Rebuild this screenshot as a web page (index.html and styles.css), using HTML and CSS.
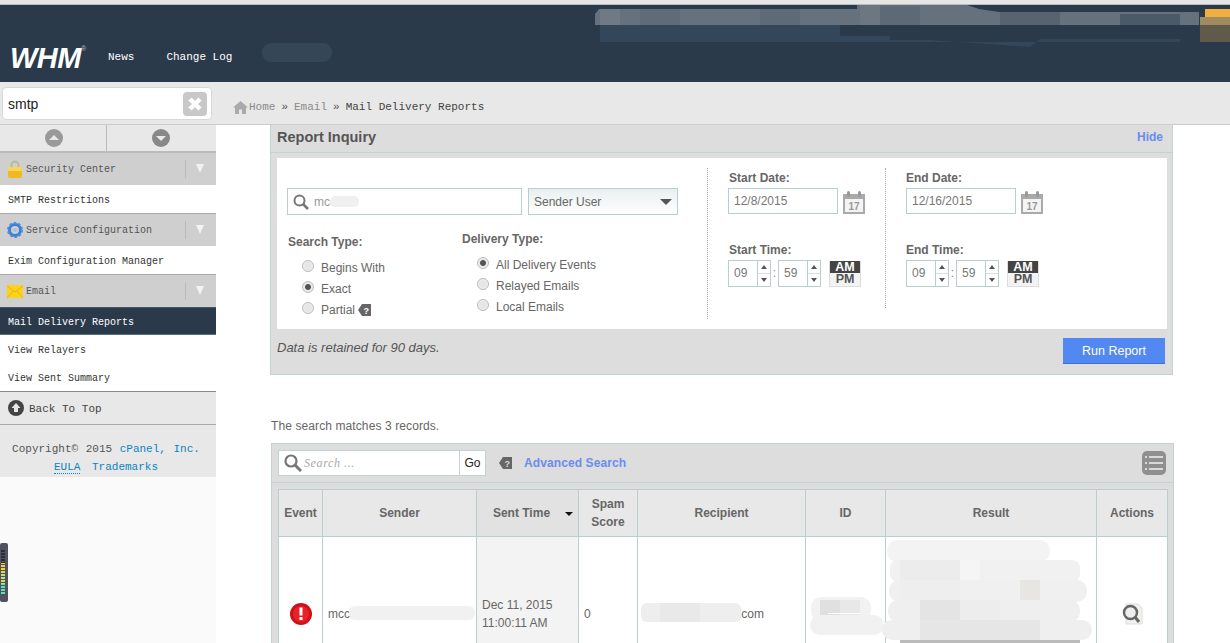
FILE: index.html
```html
<!DOCTYPE html>
<html lang="en">
<head>
<meta charset="utf-8">
<title>WHM Mail Delivery Reports</title>
<link rel="stylesheet" href="styles.css">
</head>
<body>
<div class="topline"></div>
<header class="header">
  <div class="logo">WHM<sup class="reg">®</sup></div>
  <a class="hlink news">News</a>
  <a class="hlink">Change Log</a>
</header>
<div class="subbar">
  <div class="quick">
    <span class="quick-text">smtp</span>
    <span class="quick-clear"><svg width="24" height="24" viewBox="0 0 24 24"><rect width="24" height="24" rx="4" fill="#c8c8c8"/><path d="M7 7l10 10M17 7L7 17" stroke="#fff" stroke-width="4.4"/></svg></span>
  </div>
  <nav class="crumbs">
    <svg class="home" width="15" height="13" viewBox="0 0 15 13"><path d="M7.5 0L0 6.5h2V13h4V8.500h3V13h4V6.500h2z" fill="#aaa"/></svg>
    <span>Home</span><b class="sep">»</b><span>Email</span><b class="sep">»</b><span class="here">Mail Delivery Reports</span>
  </nav>
</div>
<div class="layout">
  <aside class="sidebar">
    <div class="arrows">
      <div class="arrow-cell first"><svg width="18" height="18" viewBox="0 0 18 18"><circle cx="9" cy="9" r="9" fill="#999"/><path d="M4 11l5-5 5 5z" fill="#e8e8e8"/></svg></div>
      <div class="arrow-cell second"><svg width="18" height="18" viewBox="0 0 18 18"><circle cx="9" cy="9" r="9" fill="#888"/><path d="M4 7l5 5 5-5z" fill="#e8e8e8"/></svg></div>
    </div>
    <div class="cat">
      <svg class="cat-ico" width="14" height="18" viewBox="0 0 14 18"><path d="M3.500 8V5a3.500 3.500 0 017 0v3" fill="none" stroke="#b9b9a0" stroke-width="2"/><rect x="0" y="7" width="14" height="11" rx="2" fill="#f2b824"/><rect x="0" y="7" width="14" height="4" fill="#f9d65a"/></svg>
      <span class="cat-name">Security Center</span><span class="cat-tog"><i></i></span>
    </div>
    <a class="item">SMTP Restrictions</a>
    <div class="cat lined">
      <svg class="cat-ico wide" width="16" height="16" viewBox="0 0 16 16"><circle cx="8" cy="8" r="5.500" fill="none" stroke="#3f7fd0" stroke-width="3"/><circle cx="8" cy="8" r="7" fill="none" stroke="#4d8ee0" stroke-width="2" stroke-dasharray="2.500 2"/><circle cx="8" cy="8" r="2" fill="#9cc3ee"/></svg>
      <span class="cat-name">Service Configuration</span><span class="cat-tog"><i></i></span>
    </div>
    <a class="item">Exim Configuration Manager</a>
    <div class="cat lined">
      <svg class="cat-ico wide" width="16" height="13" viewBox="0 0 16 13"><rect width="16" height="13" fill="#fbd31d"/><path d="M0 1l8 6 8-6M0 13l6-7M16 13l-6-7" fill="none" stroke="#eeb10e"/></svg>
      <span class="cat-name">Email</span><span class="cat-tog"><i></i></span>
    </div>
    <a class="item active">Mail Delivery Reports</a>
    <a class="item">View Relayers</a>
    <a class="item">View Sent Summary</a>
    <div class="backtop">
      <svg width="16" height="16" viewBox="0 0 16 16"><circle cx="8" cy="8" r="8" fill="#444"/><path d="M8 3l4.500 5H10v4H6V8H3.500z" fill="#e8e8e8"/></svg>
      <span>Back To Top</span>
    </div>
    <div class="copy">
      <div class="copy-line">Copyright© 2015 <a class="blue">cPanel, Inc.</a></div>
      <div><a class="blue eula">EULA</a> <a class="blue">Trademarks</a></div>
    </div>
  </aside>
  <main class="content">
    <section class="panel report">
      <div class="panel-head">
        <h2 class="panel-title">Report Inquiry</h2>
        <a class="hide">Hide</a>
      </div>
      <div class="panel-rule"></div>
      <div class="form-body">
        <div class="col-main">
          <div class="search-row">
            <div class="field user">
              <svg width="16" height="16" viewBox="0 0 16 16"><circle cx="6.500" cy="6.500" r="5" fill="none" stroke="#777" stroke-width="2"/><path d="M10 10l5 5" stroke="#777" stroke-width="2.600"/></svg>
              <span>mcc</span>
            </div>
            <div class="field select"><span>Sender User</span><i class="caret"></i></div>
          </div>
          <div class="types">
            <div class="type-a">
              <div class="label">Search Type:</div>
              <div class="radio-row"><i class="radio"></i>Begins With</div>
              <div class="radio-row"><i class="radio on"></i>Exact</div>
              <div class="radio-row"><i class="radio"></i>Partial
                <svg class="tag" width="13" height="12" viewBox="0 0 13 12"><path d="M4 0h9v12H4L0 6z" fill="#666"/><text x="5.500" y="9.500" font-size="9" font-weight="700" fill="#fff" font-family="Liberation Sans">?</text></svg>
              </div>
            </div>
            <div class="type-b">
              <div class="label">Delivery Type:</div>
              <div class="radio-row"><i class="radio on"></i>All Delivery Events</div>
              <div class="radio-row"><i class="radio"></i>Relayed Emails</div>
              <div class="radio-row"><i class="radio"></i>Local Emails</div>
            </div>
          </div>
        </div>
        <div class="col-date first">
          <div class="label">Start Date:</div>
          <div class="date-row">
            <div class="field date">12/8/2015</div>
            <svg class="cal" width="22" height="23" viewBox="0 0 22 23"><path d="M0 3h22v20H0z" fill="#aaa"/><rect x="2" y="8" width="18" height="13" fill="#f4f4f4"/><rect x="4" y="0" width="3" height="6" rx="1.500" fill="#999"/><rect x="15" y="0" width="3" height="6" rx="1.500" fill="#999"/><text x="11" y="19" text-anchor="middle" font-size="10" font-weight="700" fill="#999" font-family="Liberation Sans">17</text></svg>
          </div>
          <div class="label time-label">Start Time:</div>
          <div class="time-row">
            <div class="spin"><span class="spin-val">09</span><span class="spin-btns"><i class="up"></i><i class="down"></i></span></div>
            <span class="colon">:</span>
            <div class="spin"><span class="spin-val">59</span><span class="spin-btns"><i class="up"></i><i class="down"></i></span></div>
            <div class="ampm"><span class="am">AM</span><span class="pm">PM</span></div>
          </div>
        </div>
        <div class="col-date last">
          <div class="label">End Date:</div>
          <div class="date-row">
            <div class="field date">12/16/2015</div>
            <svg class="cal" width="22" height="23" viewBox="0 0 22 23"><path d="M0 3h22v20H0z" fill="#aaa"/><rect x="2" y="8" width="18" height="13" fill="#f4f4f4"/><rect x="4" y="0" width="3" height="6" rx="1.500" fill="#999"/><rect x="15" y="0" width="3" height="6" rx="1.500" fill="#999"/><text x="11" y="19" text-anchor="middle" font-size="10" font-weight="700" fill="#999" font-family="Liberation Sans">17</text></svg>
          </div>
          <div class="label time-label">End Time:</div>
          <div class="time-row">
            <div class="spin"><span class="spin-val">09</span><span class="spin-btns"><i class="up"></i><i class="down"></i></span></div>
            <span class="colon">:</span>
            <div class="spin"><span class="spin-val">59</span><span class="spin-btns"><i class="up"></i><i class="down"></i></span></div>
            <div class="ampm"><span class="am">AM</span><span class="pm">PM</span></div>
          </div>
        </div>
      </div>
      <div class="form-foot">
        <em class="retain">Data is retained for 90 days.</em>
        <button class="run">Run Report</button>
      </div>
    </section>
    <p class="matches">The search matches 3 records.</p>
    <section class="panel results">
      <div class="toolbar">
        <div class="tsearch">
          <svg width="18" height="18" viewBox="0 0 18 18"><circle cx="7" cy="7" r="5.500" fill="none" stroke="#777" stroke-width="2.200"/><path d="M11 11l6 6" stroke="#777" stroke-width="3"/></svg>
          <span class="tplaceholder">Search ...</span>
          <span class="go">Go</span>
        </div>
        <svg class="ttag" width="13" height="12" viewBox="0 0 13 12"><path d="M4 0h9v12H4L0 6z" fill="#666"/><text x="5.500" y="9.500" font-size="9" font-weight="700" fill="#ddd" font-family="Liberation Sans">?</text></svg>
        <a class="advanced">Advanced Search</a>
        <svg class="listico" width="24" height="24" viewBox="0 0 24 24"><rect width="24" height="24" rx="5" fill="#8f8f8f"/><path d="M3 6h2M7 6h14M3 12h2M7 12h14M3 18h2M7 18h14" stroke="#f2f2f2" stroke-width="1.600"/></svg>
      </div>
      <div class="panel-rule"></div>
      <div class="table-wrap">
        <table class="grid">
          <colgroup><col class="c1"><col class="c2"><col class="c3"><col class="c4"><col class="c5"><col class="c6"><col class="c7"><col class="c8"></colgroup>
          <thead>
            <tr><th>Event</th><th>Sender</th><th class="sorted"><span class="sort-label">Sent Time</span><i class="sort"></i></th><th>Spam<br>Score</th><th>Recipient</th><th>ID</th><th>Result</th><th>Actions</th></tr>
          </thead>
          <tbody>
            <tr>
              <td class="ctr"><svg width="22" height="22" viewBox="0 0 22 22"><circle cx="11" cy="11" r="11" fill="#d01018"/><circle cx="11" cy="11" r="8" fill="#e8222a"/><rect x="9.500" y="4.500" width="3" height="8" fill="#fff"/><rect x="9.500" y="14" width="3" height="3" fill="#fff"/></svg></td>
              <td>mcc</td>
              <td class="sorted-cell">Dec 11, 2015<br>11:00:11 AM</td>
              <td>0</td>
              <td class="rcpt">.com</td>
              <td></td>
              <td></td>
              <td class="ctr"><svg width="22" height="22" viewBox="0 0 22 22"><path d="M5 1h12l4 4v16H5z" fill="#f1f1ee" stroke="#ddd"/><circle cx="9.500" cy="9.500" r="6.500" fill="#eee" stroke="#666" stroke-width="2.500"/><path d="M14 14l4 5" stroke="#666" stroke-width="3"/></svg></td>
            </tr>
          </tbody>
        </table>
      </div>
    </section>
  </main>
</div>
<svg class="overlay" width="1230" height="643" viewBox="0 0 1230 643">
  <defs>
    <pattern id="stripes" width="8" height="3" patternUnits="userSpaceOnUse"><rect width="8" height="1" fill="#50525e"/></pattern>
  </defs>
  <path d="M595 14l4-5h258v-4h110l12 4 20 3h200v13H595z" fill="#65717d"/>
  <rect x="600" y="9" width="20" height="16" fill="#6f7a85"/>
  <rect x="640" y="9" width="40" height="16" fill="#5f6b78"/>
  <rect x="760" y="9" width="40" height="16" fill="#5d6a77"/>
  <rect x="860" y="5" width="20" height="20" fill="#6c7782"/>
  <rect x="880" y="6" width="40" height="19" fill="#5c6976"/>
  <rect x="1000" y="12" width="60" height="13" fill="#566471"/>
  <rect x="1120" y="14" width="60" height="11" fill="#4a5a69"/>
  <path d="M600 25h240v11h50v4h40l100 7 10-8h140v3h-580z" fill="#34465a"/>
  <path d="M1205 9h25v8h-25z" fill="#f0b040"/><path d="M1200 17h30v8h-30z" fill="#a08a60"/><path d="M1200 25h30v17h-30z" fill="#5f5a4a"/>
  <rect x="262" y="43" width="70" height="19" rx="9" fill="#354757"/>
  <rect x="330" y="196" width="29" height="11" rx="5" fill="#f0f0f0"/>
  <rect x="349" y="606" width="126" height="14" rx="6" fill="#f1f1f1"/>
  <rect x="641" y="603" width="100" height="19" rx="6" fill="#eeeeee"/>
  <rect x="660" y="603" width="40" height="19" fill="#e9e9e9"/>
  <rect x="811" y="597" width="60" height="24" rx="10" fill="#f2f2f2"/>
  <rect x="820" y="600" width="20" height="20" fill="#e0e0e0"/>
  <rect x="840" y="600" width="20" height="20" fill="#e8e8e8"/>
  <rect x="828" y="613" width="32" height="1" fill="#fff"/>
  <rect x="810" y="615" width="74" height="20" rx="10" fill="#f1f1f1"/>
  <rect x="887" y="540" width="163" height="22" rx="10" fill="#f3f3f3"/>
  <rect x="890" y="560" width="190" height="22" rx="8" fill="#f1f1f1"/>
  <rect x="889" y="580" width="198" height="22" rx="10" fill="#f0f0f0"/>
  <rect x="888" y="600" width="192" height="22" rx="10" fill="#efefef"/>
  <rect x="882" y="620" width="210" height="20" rx="10" fill="#efefef"/>
  <rect x="900" y="560" width="60" height="20" fill="#ececec"/>
  <rect x="960" y="560" width="20" height="20" fill="#f5f5f5"/>
  <rect x="1020" y="580" width="20" height="20" fill="#e8e6e3"/>
  <rect x="900" y="580" width="60" height="20" fill="#eeeeee"/>
  <rect x="920" y="600" width="40" height="20" fill="#e4e4e4"/>
  <rect x="960" y="600" width="40" height="20" fill="#ededed"/>
  <rect x="920" y="620" width="120" height="20" fill="#e6e6e6"/>
  <rect x="900" y="640" width="180" height="3" fill="#bbb"/>
  <rect x="0" y="543" width="8" height="59" rx="2" fill="#50525e"/>
  <rect x="1" y="550" width="4" height="13" fill="#2a2c36"/>
  <rect x="1" y="563" width="4" height="10" fill="#f2d23a"/>
  <rect x="1" y="573" width="4" height="11" fill="#c6e06a"/>
  <rect x="1" y="584" width="4" height="11" fill="#5fdfb0"/>
  <rect x="1" y="550" width="4" height="45" fill="url(#stripes)"/>
</svg>
</body>
</html>
```
FILE: styles.css
```css
* { box-sizing: border-box; }
html, body { margin: 0; padding: 0; }
body {
  position: relative;
  width: 1230px;
  height: 643px;
  overflow: hidden;
  background: #fff;
  font-family: "Liberation Sans", Arial, sans-serif;
  font-size: 12px;
  color: #666;
}
.topline { height: 5px; background: #e6e6e6; border-bottom: 1px solid #bbb; }
.header {
  height: 77px;
  background: #2a3a4b;
  display: flex;
  align-items: flex-start;
  padding: 39px 0 0 10px;
  color: #fff;
}
.logo {
  width: 98px;
  font: italic 700 29px/28px "Liberation Sans", sans-serif;
  letter-spacing: -0.5px;
  color: #fff;
  white-space: nowrap;
}
.reg { font-size: 7px; font-style: normal; font-weight: 400; vertical-align: 17px; line-height: 0; color: #bbb; letter-spacing: 0; }
.hlink { font: 11px/26px "Liberation Mono", monospace; color: #fff; }
.news { margin-right: 32px; }
.subbar {
  height: 43px;
  background: #e8e8e8;
  border-bottom: 1px solid #ccc;
  display: flex;
  align-items: flex-start;
}
.quick {
  width: 210px;
  height: 33px;
  margin: 5px 0 0 2px;
  background: #fff;
  border: 1px solid #d8d8d8;
  border-radius: 4px;
  display: flex;
  align-items: center;
  justify-content: space-between;
  padding: 0 4px 0 5px;
}
.quick-text { font-size: 14px; color: #222; }
.quick-clear { display: flex; }
.crumbs {
  margin: 17px 0 0 21px;
  display: flex;
  align-items: center;
  height: 16px;
  font: 11px/16px "Liberation Mono", monospace;
  color: #888;
}
.home { margin-right: 1px; }
.sep { font-weight: 400; color: #555; margin: 0 6px; }
.here { color: #444; }
.layout { display: flex; height: 519px; }
.sidebar { width: 216px; flex: none; background: #fafafa; font: 10px/28px "Liberation Mono", monospace; color: #444; }
.arrows { display: flex; height: 28px; background: #e8e8e8; border-bottom: 2px solid #bbb; }
.arrow-cell { flex: 1; display: flex; align-items: center; justify-content: center; padding-bottom: 1px; }
.arrow-cell.first { flex: none; width: 107px; border-right: 1px solid #bbb; padding-left: 2px; }
.arrow-cell.second { padding-right: 2px; }
.cat {
  height: 32px;
  background: #cfcfcf;
  display: flex;
  align-items: center;
  padding-left: 8px;
}
.cat.lined { height: 33px; border-top: 1px solid #aaa; }
.cat-ico { margin-right: 4px; flex: none; }
.cat-ico.wide { margin-left: -1px; margin-right: 3px; }
.cat-name { flex: 1; color: #555; padding-top: 2px; }
.cat-tog { width: 31px; height: 18px; border-left: 1px solid #bbb; display: flex; align-items: center; justify-content: center; padding-right: 3px; }
.cat-tog i { width: 0; height: 0; margin-top: -2px; border: 4.500px solid transparent; border-top: 9px solid #f2f2f2; border-bottom: 0; }
.item { display: block; height: 28px; padding-left: 8px; background: #fff; color: #333; line-height: 31px; }
.item.active { background: #2a3a4b; color: #fff; border-top: 1px solid #3e5466; border-bottom: 1px solid #54707f; line-height: 29px; }
.backtop {
  height: 34px;
  background: #e8e8e8;
  border-top: 1px solid #888;
  border-bottom: 1px solid #aaa;
  display: flex;
  align-items: center;
  gap: 5px;
  padding-left: 8px;
  font-size: 11px;
  color: #444;
}
.backtop span { padding-top: 2px; }
.copy { height: 52px; background: #e8e8e8; padding-top: 15px; text-align: center; font-size: 11px; line-height: 18px; color: #555; padding-right: 4px; }
.copy-line { word-spacing: 1px; }
.blue { color: #0a85c0; }
.eula { border-bottom: 1px dotted #0a85c0; margin-right: 5px; }
.content { flex: none; width: 904px; margin-left: 54px; }
.panel { background: #ddd; border: 1px solid #c3d3d3; }
.report { height: 250px; width: 903px; border-top: 0; }
.panel-head { height: 27px; display: flex; align-items: center; justify-content: space-between; padding: 0 9px 3px 6px; }
.panel-title { margin: 0; font-size: 14.500px; font-weight: 700; color: #555; }
.hide { color: #6a8cf0; font-weight: 700; font-size: 12px; }
.panel-rule { height: 1px; background: #c3d3d3; }
.form-body { display: flex; height: 171px; margin: 5px 5px 0 6px; background: #fff; }
.col-main { width: 431px; height: 151px; margin-top: 10px; border-right: 1px dotted #aaa; padding: 20px 0 0 10px; }
.search-row { display: flex; gap: 6px; }
.field { background: #fff; border: 1px solid #b9cfcf; display: flex; align-items: center; }
.user { width: 235px; height: 27px; padding-left: 5px; gap: 5px; color: #999; }
.select { width: 150px; height: 27px; padding: 0 5px; justify-content: space-between; color: #666; background: linear-gradient(#e9efef, #fff); }
.caret { width: 0; height: 0; border: 6px solid transparent; border-top: 6px solid #555; border-bottom: 0; }
.types { display: flex; }
.type-a { width: 175px; padding: 19px 0 0 1px; }
.type-b { padding-top: 16px; }
.label { font-weight: 700; color: #666; line-height: 16px; }
.type-a .radio-row { margin-left: 14px; }
.type-b .radio-row { margin-left: 15px; }
.type-a .label, .type-b .label { margin-bottom: 7px; }
.radio-row { display: flex; align-items: center; height: 21px; color: #666; }
.radio {
  width: 12px;
  height: 12px;
  margin-right: 7px;
  margin-top: -3px;
  border-radius: 50%;
  background: #e6e6e6;
  border: 1px solid #bbb;
  box-shadow: inset 0 0 2px #fff;
}
.radio.on { background: radial-gradient(circle, #555 0 2.500px, #e6e6e6 3.500px); }
.tag { margin-left: 3px; }
.col-date { width: 178px; height: 140px; margin-top: 10px; border-right: 1px dotted #aaa; padding: 2px 0 0 20px; }
.col-date.last { border-right: 0; }
.col-date .label { height: 16px; padding-left: 1px; }
.col-date.last .label { padding-left: 0; }
.date-row { display: flex; margin-top: 2px; }
.date { width: 110px; height: 26px; padding-left: 5px; color: #777; }
.cal { margin: 3px 0 0 5px; }
.time-label { margin-top: 28px; }
.time-row { display: flex; align-items: flex-start; margin-top: 2px; }
.spin { width: 43px; height: 27px; border: 1px solid #b9cfcf; display: flex; background: #fff; }
.spin-val { width: 28px; line-height: 25px; padding-left: 5px; color: #777; }
.spin-btns { width: 13px; border-left: 1px solid #b9cfcf; display: flex; flex-direction: column; }
.up, .down { flex: 1; display: flex; align-items: center; justify-content: center; }
.up { border-bottom: 1px solid #ddd; }
.up::before { content: ""; border: 3px solid transparent; border-bottom: 4px solid #555; border-top: 0; }
.down::before { content: ""; border: 3px solid transparent; border-top: 4px solid #555; border-bottom: 0; }
.colon { width: 7px; text-align: center; line-height: 27px; color: #888; }
.ampm { width: 32px; height: 26px; margin: 1px 0 0 8px; display: flex; flex-direction: column; font-weight: 700; font-size: 12.500px; text-align: center; line-height: 13px; border: 1px solid #ddd; border-top: 0; }
.am { background: #444; color: #fff; height: 12px; }
.pm { background: #f3f3f3; color: #555; height: 14px; }
.form-foot { display: flex; justify-content: space-between; padding: 9px 7px 0 6px; }
.retain { font-size: 13px; color: #555; line-height: 20px; }
.run { width: 102px; height: 26px; border: 0; border-bottom: 1px solid #3f6fd0; background: #5288f2; color: #fff; font: 12.500px "Liberation Sans", sans-serif; padding: 0; }
.matches { margin: 44px 0 0 1px; height: 14px; line-height: 14px; color: #666; letter-spacing: 0.1px; }
.results { width: 903px; height: 400px; margin: 10px 0 0 1px; }
.toolbar { height: 38px; display: flex; align-items: center; padding: 0 7px 0 6px; }
.tsearch { width: 208px; height: 26px; background: #fff; border: 1px solid #c3d3d3; display: flex; align-items: center; padding-left: 5px; flex: none; }
.tplaceholder { flex: 1; margin-left: 2px; font: italic 12px "Liberation Serif", serif; color: #aaa; letter-spacing: 0.6px; }
.go { width: 26px; height: 100%; border-left: 1px solid #c3d3d3; color: #222; text-align: center; line-height: 24px; }
.ttag { margin-left: 13px; }
.advanced { margin-left: 12px; flex: 1; color: #6a8cf0; font-weight: 700; letter-spacing: 0.1px; }
.table-wrap { padding: 6px 0 0 6px; }
.grid { border-collapse: collapse; table-layout: fixed; width: 889px; }
.c1 { width: 44px; } .c2 { width: 154px; } .c3 { width: 102px; } .c4 { width: 59px; }
.c5 { width: 168px; } .c6 { width: 80px; } .c7 { width: 211px; } .c8 { width: 71px; }
.grid th, .grid td { border: 1px solid #b9cfcf; padding: 0 5px; }
.grid th { height: 47px; background: #e8e8e8; font-weight: 700; color: #666; line-height: 18px; text-align: center; }
.grid th.sorted { background: #e2e2e2; position: relative; }
.sort-label { margin-right: 12px; }
.sort { position: absolute; right: 5px; top: 22px; border: 4px solid transparent; border-top: 4px solid #111; border-bottom: 0; }
.grid td { height: 155px; background: #fff; line-height: 18px; color: #666; }
.grid td.sorted-cell { background: #f3f3f3; }
.ctr { text-align: center; }
.ctr svg { display: inline-block; vertical-align: middle; }
.grid td.rcpt { text-align: right; padding-right: 41px; }
.overlay { position: absolute; left: 0; top: 0; pointer-events: none; }
```
